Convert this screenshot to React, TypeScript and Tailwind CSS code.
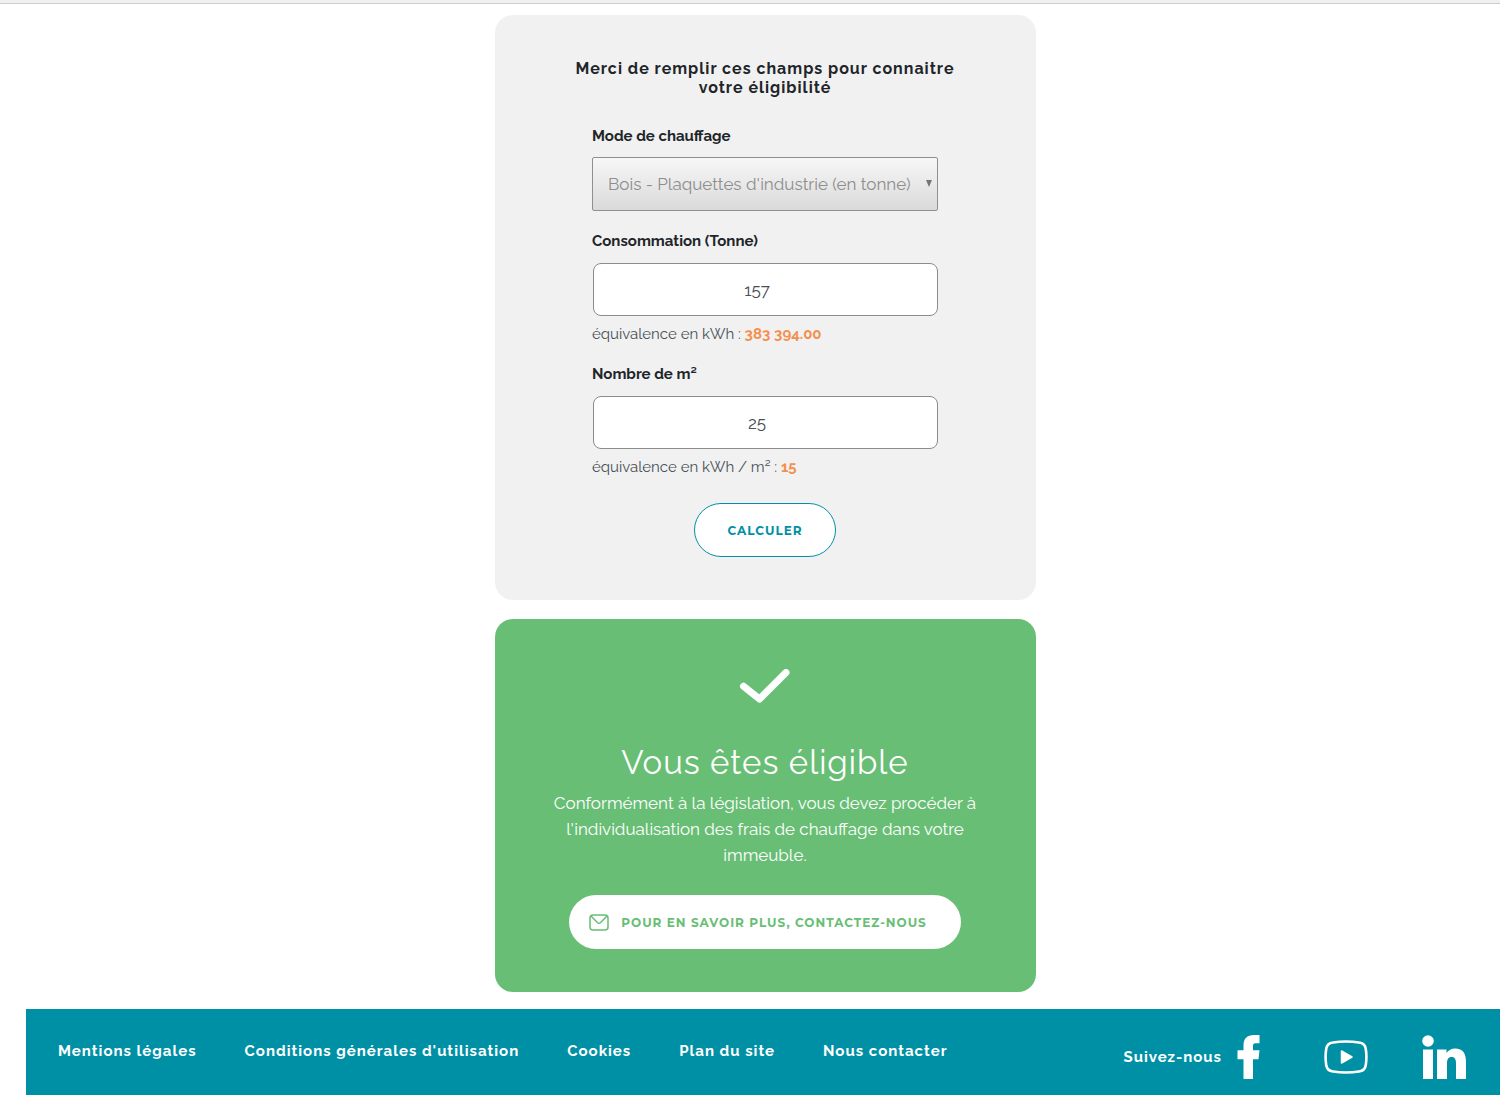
import { useState } from "react";

const footerLinks = [
  "Mentions légales",
  "Conditions générales d'utilisation",
  "Cookies",
  "Plan du site",
  "Nous contacter",
];

const labelClass = "block text-[15px] leading-5 font-bold text-[#212529]";
const inputClass =
  "block h-[53px] w-full rounded-lg border border-[#8c8c8c] bg-white pr-0.5 text-center text-[17px] text-[#495057]";
const hintClass = "mt-2 text-[15px] leading-5 text-[#495057]";

function CheckIcon() {
  return (
    <svg viewBox="0 0 50 34" className="h-[34px] w-[50px]" fill="none" aria-hidden="true">
      <path d="M3.5 17.2L19.5 30L46 3.5" stroke="white" strokeWidth="7" strokeLinecap="round" strokeLinejoin="round" />
    </svg>
  );
}

function MailIcon() {
  return (
    <svg viewBox="0 0 20 17" className="h-[17px] w-5" fill="none" stroke="#68be75" strokeWidth="1.5" aria-hidden="true">
      <rect x="1" y="1" width="18" height="15" rx="3" />
      <path d="M2 2L8.6 8.8Q10 10 11.4 8.8L18 2" />
    </svg>
  );
}

function FacebookIcon() {
  return (
    <svg viewBox="0 0 44 44" className="size-11" fill="white" aria-hidden="true">
      <path d="M17.500 44V24.300H11.500V15.200H17.500V10.500C17.500 3.500 21 0 28 0H33.500V8.200H29.500C27.500 8.200 27 9.200 27 11V15.200H33.500L32.500 24.300H27V44Z" />
    </svg>
  );
}

function YoutubeIcon() {
  return (
    <svg viewBox="0 0 44 44" className="size-11" fill="none" aria-hidden="true">
      <path
        d="M9 7.500Q22 5.500 35 7.500Q41 8.200 41.800 14Q43 22 41.800 30Q41 35.800 35 36.500Q22 38.500 9 36.500Q3 35.800 2.200 30Q1 22 2.200 14Q3 8.200 9 7.500Z"
        stroke="white"
        strokeWidth="2.600"
      />
      <path d="M17.500 16V28L28 22Z" fill="white" stroke="white" strokeWidth="1.500" strokeLinejoin="round" />
    </svg>
  );
}

function LinkedinIcon() {
  return (
    <svg viewBox="0 0 44 44" className="size-11" fill="white" aria-hidden="true">
      <circle cx="6" cy="6" r="5.800" />
      <path d="M1 14.500H11V44H1Z" />
      <path d="M15 14.500H24.500V18C26.500 15.200 29.500 13.500 33 13.500C41 13.500 44 18.500 44 27V44H34V28.500C34 24.500 33 22 29.600 22C26.200 22 25 24.500 25 28.500V44H15Z" />
    </svg>
  );
}

export default function App() {
  const [mode, setMode] = useState("industrie");
  const [consumption, setConsumption] = useState("157");
  const [area, setArea] = useState("25");

  return (
    <div className="flex min-h-screen flex-col bg-white font-['Raleway','Lato',sans-serif]">
      <div className="h-1 border-b border-[#cfcdca] bg-[#f1f0ee]" />

      <main className="flex flex-1 flex-col items-center pt-[11px] pb-[17px] pl-[30px]">
        <form
          className="flex w-full max-w-[541px] flex-col items-center rounded-[18px] bg-[#f1f1f1] px-10 pt-11 pb-[43px]"
          onSubmit={(event) => event.preventDefault()}
        >
          <h2 className="max-w-[420px] text-center text-base leading-[19px] font-bold tracking-[1px] text-[#212529]">
            Merci de remplir ces champs pour connaitre votre éligibilité
          </h2>

          <div className="mt-[29px] w-full max-w-[346px]">
            <label htmlFor="mode" className={labelClass}>
              Mode de chauffage
            </label>
            <div className="relative mt-[11px]">
              <select
                id="mode"
                value={mode}
                onChange={(event) => setMode(event.target.value)}
                className="block h-[54px] w-full appearance-none rounded-xs border border-[#8f8f8f] bg-linear-to-b from-[#f7f7f7] to-[#dadada] pt-0.5 pr-4 pl-[15px] text-[17px] text-[#8e8e8e]"
              >
                <option value="industrie">Bois - Plaquettes d'industrie (en tonne)</option>
              </select>
              <svg
                viewBox="0 0 6 7"
                className="pointer-events-none absolute top-[23px] right-[6px] h-[7px] w-[6px]"
                fill="#757575"
                aria-hidden="true"
              >
                <path d="M0 0H6L3 7Z" />
              </svg>
            </div>

            <label htmlFor="consumption" className={`mt-5 ${labelClass}`}>
              Consommation (Tonne)
            </label>
            <div className="mt-3 pl-px">
              <input
                id="consumption"
                type="number"
                value={consumption}
                onChange={(event) => setConsumption(event.target.value)}
                className={inputClass}
              />
            </div>
            <p className={hintClass}>
              équivalence en kWh : <strong className="text-[#f4904e]">383 394.00</strong>
            </p>

            <label htmlFor="area" className={`mt-5 ${labelClass}`}>
              Nombre de m²
            </label>
            <div className="mt-3 pl-px">
              <input
                id="area"
                type="number"
                value={area}
                onChange={(event) => setArea(event.target.value)}
                className={inputClass}
              />
            </div>
            <p className={hintClass}>
              équivalence en kWh / m² : <strong className="text-[#f4904e]">15</strong>
            </p>
          </div>

          <button
            type="submit"
            className="mt-[26px] h-[54px] rounded-full border border-[#0090a5] bg-white px-8 pt-0.5 font-['Montserrat','Inter',sans-serif] text-xs font-bold tracking-[1px] text-[#0090a5]"
          >
            CALCULER
          </button>
        </form>

        <section className="mt-[19px] flex w-full max-w-[541px] flex-col items-center rounded-[18px] bg-[#68be75] px-[50px] pt-[50px] pb-[43px] text-center text-white">
          <CheckIcon />
          <h1 className="mt-10 text-[33px] leading-10 font-normal tracking-[1px]">Vous êtes éligible</h1>
          <p className="mt-[7px] text-[17px] leading-[26px]">
            Conformément à la législation, vous devez procéder à l'individualisation des frais de chauffage dans votre
            immeuble.
          </p>
          <a
            href="#contact"
            className="mt-[27px] flex h-[54px] items-center gap-3 rounded-full bg-white pr-[34px] pl-5 font-['Montserrat','Inter',sans-serif] text-xs font-bold tracking-[1px] text-[#68be75]"
          >
            <MailIcon />
            <span className="pt-0.5">POUR EN SAVOIR PLUS, CONTACTEZ-NOUS</span>
          </a>
        </section>
      </main>

      <footer className="ml-[26px] flex h-[86px] items-start justify-between bg-[#0090a5] pr-[34px] pl-8 text-[15px] leading-5 font-bold tracking-[1px] text-white">
        <nav className="flex gap-12 pt-8">
          {footerLinks.map((link) => (
            <a key={link} href="#" className="whitespace-nowrap">
              {link}
            </a>
          ))}
        </nav>
        <div className="flex items-center gap-1 pt-[26px]">
          <span className="whitespace-nowrap">Suivez-nous</span>
          <div className="flex gap-[54px]">
            <a href="#facebook" aria-label="Facebook">
              <FacebookIcon />
            </a>
            <a href="#youtube" aria-label="YouTube">
              <YoutubeIcon />
            </a>
            <a href="#linkedin" aria-label="LinkedIn">
              <LinkedinIcon />
            </a>
          </div>
        </div>
      </footer>
    </div>
  );
}
